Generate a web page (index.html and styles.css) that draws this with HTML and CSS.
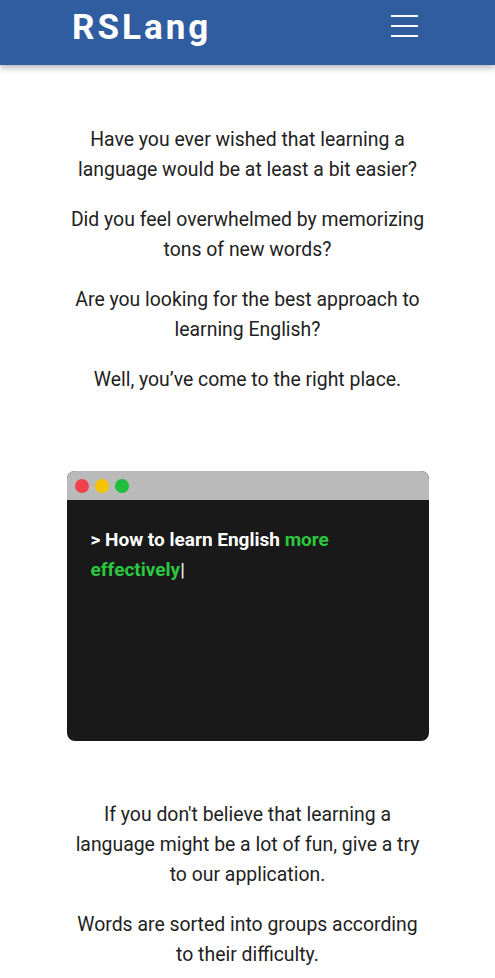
FILE: index.html
```html
<!DOCTYPE html>
<html lang="en">
<head>
<meta charset="utf-8">
<title>RSLang</title>
<link rel="stylesheet" href="styles.css">
</head>
<body>
<header class="header">
  <div class="logo">RSLang</div>
  <button class="burger" aria-label="menu">
    <svg width="27" height="24" viewBox="0 0 27 24"><path d="M0 2h27M0 12h27M0 22h27" stroke="#fff" stroke-width="2.2"/></svg>
  </button>
</header>
<main class="main">
  <section class="intro">
    <p>Have you ever wished that learning a language would be at least a bit easier?</p>
    <p>Did you feel overwhelmed by memorizing tons of new words?</p>
    <p>Are you looking for the best approach to learning English?</p>
    <p>Well, you’ve come to the right place.</p>
  </section>
  <div class="terminal">
    <div class="term-bar">
      <span class="dot red"></span><span class="dot yellow"></span><span class="dot green"></span>
    </div>
    <div class="term-body">
      <p>&gt; How to learn English <span class="hl">more effectively</span><span class="cursor">|</span></p>
    </div>
  </div>
  <section class="intro">
    <p>If you don't believe that learning a language might be a lot of fun, give a try to our application.</p>
    <p>Words are sorted into groups according to their difficulty.</p>
  </section>
</main>
</body>
</html>
```
FILE: styles.css
```css
* { box-sizing: border-box; }
html, body { margin: 0; padding: 0; background: #fff; }
body { font-family: Roboto, "Noto Sans", sans-serif; color: #222; }
.header {
  height: 65px;
  background: #305d9f;
  display: flex;
  align-items: center;
  justify-content: space-between;
  padding: 0 77px 13px 72px;
  box-shadow: 0 3px 6px rgba(0,0,0,0.28);
  position: relative;
}
.logo {
  color: #fff;
  font-weight: 700;
  font-size: 35px;
  letter-spacing: 3px;
  line-height: 1;
  margin-top: 2px;
}
.burger {
  background: none;
  border: 0;
  padding: 0;
  display: flex;
}
.main {
  width: 362px;
  margin: 0 auto;
  padding-top: 60px;
}
.intro { padding: 0 3px; }
.intro p {
  margin: 0 0 20px;
  font-size: 19.4px;
  line-height: 30px;
  text-align: center;
}
.intro p:last-child { margin-bottom: 0; }
.intro:first-child { margin-bottom: 76px; }
.terminal {
  height: 270px;
  border-radius: 8px;
  overflow: hidden;
  background: #191919;
  margin-bottom: 59px;
}
.term-bar {
  height: 29px;
  background: #bababa;
  display: flex;
  align-items: center;
  gap: 6px;
  padding-left: 8px;
}
.dot { width: 14px; height: 14px; border-radius: 50%; }
.red { background: #f0414e; }
.yellow { background: #f6c300; }
.green { background: #1fbf3b; }
.term-body { padding: 25px 24px; }
.term-body p {
  margin: 0;
  color: #fff;
  font-weight: 700;
  font-size: 19px;
  line-height: 30px;
}
.hl { color: #2bc83f; }
.cursor { color: #fff; font-weight: 400; }
```
